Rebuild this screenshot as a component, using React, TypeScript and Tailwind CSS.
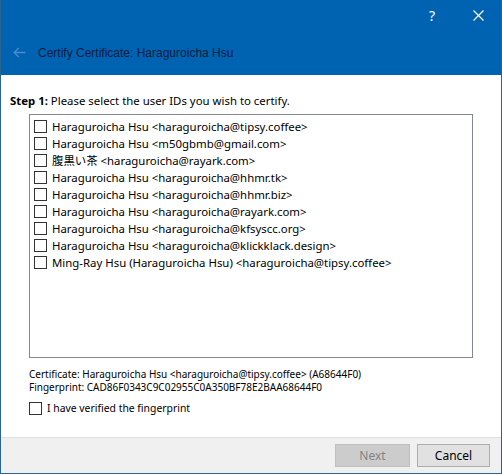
import React from "react";

const ids = [
  "Haraguroicha Hsu <haraguroicha@tipsy.coffee>",
  "Haraguroicha Hsu <m50gbmb@gmail.com>",
  "腹黒い茶 <haraguroicha@rayark.com>",
  "Haraguroicha Hsu <haraguroicha@hhmr.tk>",
  "Haraguroicha Hsu <haraguroicha@hhmr.biz>",
  "Haraguroicha Hsu <haraguroicha@rayark.com>",
  "Haraguroicha Hsu <haraguroicha@kfsyscc.org>",
  "Haraguroicha Hsu <haraguroicha@klickklack.design>",
  "Ming-Ray Hsu (Haraguroicha Hsu) <haraguroicha@tipsy.coffee>",
];

function Box() {
  return <span className="block w-[13px] h-[13px] border border-[#333] bg-white shrink-0" />;
}

export default function App() {
  return (
    <div
      className="w-[502px] h-[474px] flex flex-col bg-white border-x border-b border-[#2a6592] text-[11.4px] text-black overflow-hidden"
      style={{ fontFamily: '"Noto Sans", "Noto Sans CJK JP", sans-serif' }}
    >
      <div className="h-[75px] bg-[#0063b1] flex flex-col shrink-0">
        <div className="h-[31px] flex justify-end items-center text-white">
          <span className="w-[46px] text-center text-[14px]">?</span>
          <span className="w-[46px] flex justify-center">
            <svg width="11" height="11" viewBox="0 0 11 11" stroke="white" strokeWidth="1.2">
              <path d="M0.5 0.5 L10.5 10.5 M10.5 0.5 L0.5 10.5" />
            </svg>
          </span>
        </div>
        <div className="flex items-center h-[44px] pb-[1px]">
          <span className="w-[36px] flex justify-center">
            <svg width="13" height="11" viewBox="0 0 13 11" stroke="#4a8bd0" strokeWidth="1.3" fill="none">
              <path d="M12.5 5.5 H1.2 M5.8 1 L1.2 5.5 L5.8 10" />
            </svg>
          </span>
          <span
            className="text-[12px] text-[#0b1c3d] ml-[1px]"
            style={{ fontFamily: '"Liberation Sans", sans-serif' }}
          >
            Certify Certificate: Haraguroicha Hsu
          </span>
        </div>
      </div>

      <div className="flex-1 flex flex-col px-[28px] pt-[18px]">
        <div className="-ml-[19px] leading-[16px]">
          <span className="font-bold">Step 1:</span> Please select the user IDs you wish to certify.
        </div>
        <div className="mt-[5px] h-[244px] border border-[#828790] flex flex-col pt-[3px] pl-[4px]">
          {ids.map((id) => (
            <div key={id} className="flex items-center gap-[5px] h-[17px]">
              <Box />
              <span className="leading-[17px] whitespace-nowrap">{id}</span>
            </div>
          ))}
        </div>
        <div className="mt-[10px] leading-[13px] text-[10px]">
          <div>Certificate: Haraguroicha Hsu &lt;haraguroicha@tipsy.coffee&gt; (A68644F0)</div>
          <div>Fingerprint: CAD86F0343C9C02955C0A350BF78E2BAA68644F0</div>
        </div>
        <div className="mt-[7px] flex items-center gap-[5px]">
          <Box />
          <span className="text-[10.4px]">I have verified the fingerprint</span>
        </div>
      </div>

      <div className="h-[36px] shrink-0 bg-[#f0f0f0] border-t border-[#dfdfdf] flex justify-end items-center gap-[7px] pr-[11px] text-[12px]">
        <button className="w-[75px] h-[23px] bg-[#cccccc] border border-[#bfbfbf] text-[#838383]">Next</button>
        <button className="w-[73px] h-[23px] bg-[#e1e1e1] border border-[#adadad] text-black">Cancel</button>
      </div>
    </div>
  );
}
